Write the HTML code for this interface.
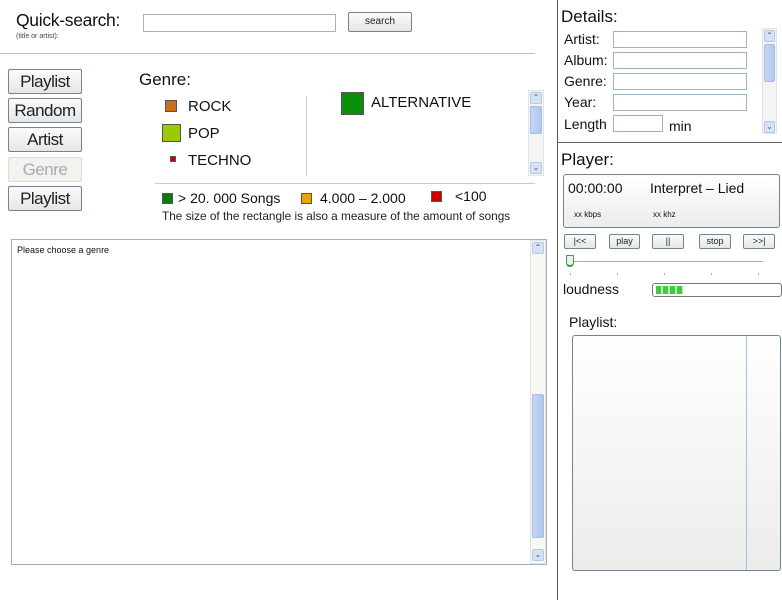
<!DOCTYPE html>
<html><head><meta charset="utf-8"><style>
*{margin:0;padding:0;box-sizing:border-box}
body{width:782px;height:600px;background:#fff;position:relative;overflow:hidden;font-family:"Liberation Sans",Arial,sans-serif;color:#111}
.a{position:absolute;white-space:nowrap}
.btn{position:absolute;border:1px solid #6f8494;border-radius:2px;background:linear-gradient(#fbfbfb,#e6e6e6);text-align:center;color:#222;white-space:nowrap}
.inp{position:absolute;border:1px solid #9fb3c3;background:#fff}
.sb{position:absolute;background:#f4f4f4;border:1px solid #dde4ec}
.arr{position:absolute;left:1px;width:12px;height:12px;background:#d6e1f3;border:1px solid #b7c8e3;border-radius:2px;font-size:8px;line-height:10px;text-align:center;color:#3a5b8c}
.thumb{position:absolute;left:1px;width:12px;background:linear-gradient(90deg,#c5d6f5,#b2c7ee);border:1px solid #a8bde4;border-radius:2px}
.sq{position:absolute;border:1px solid #555}
</style></head><body>
<div class="a" style="left:16px;top:10px;font-size:17.5px;letter-spacing:-0.3px">Quick-search:</div>
<div class="a" style="left:16px;top:33px;font-size:7px;color:#444">(title or artist):</div>
<div class="inp" style="left:143px;top:14px;width:193px;height:18px"></div>
<div class="btn" style="left:348px;top:12px;width:64px;height:20px;font-size:10px;line-height:17px">search</div>
<div class="a" style="left:0;top:53px;width:535px;height:1px;background:#b8c4cc"></div>
<div class="a" style="left:557px;top:0;width:1px;height:600px;background:#555"></div>

<div class="btn" style="left:8px;top:69px;width:74px;height:25px;font-size:17px;line-height:23px;letter-spacing:-0.5px">Playlist</div>
<div class="btn" style="left:8px;top:98px;width:74px;height:25px;font-size:17px;line-height:23px;letter-spacing:-0.5px">Random</div>
<div class="btn" style="left:8px;top:127px;width:74px;height:25px;font-size:17px;line-height:23px;letter-spacing:-0.5px">Artist</div>
<div class="btn" style="left:8px;top:157px;width:74px;height:25px;font-size:17px;line-height:23px;letter-spacing:-0.5px;color:#aaa;border-color:#dcdcd4;background:#f2f2ee">Genre</div>
<div class="btn" style="left:8px;top:186px;width:74px;height:25px;font-size:17px;line-height:23px;letter-spacing:-0.5px">Playlist</div>

<div class="a" style="left:139px;top:70px;font-size:17px">Genre:</div>
<div class="sq" style="left:165px;top:100px;width:12px;height:12px;background:#cc6e1c"></div>
<div class="a" style="left:188px;top:98px;font-size:15px">ROCK</div>
<div class="sq" style="left:162px;top:124px;width:19px;height:18px;background:#99cc00"></div>
<div class="a" style="left:188px;top:125px;font-size:15px">POP</div>
<div class="sq" style="left:170px;top:156px;width:6px;height:6px;background:#c00"></div>
<div class="a" style="left:188px;top:152px;font-size:15px">TECHNO</div>
<div class="a" style="left:306px;top:96px;width:1px;height:80px;background:#ccc"></div>
<div class="sq" style="left:341px;top:92px;width:23px;height:23px;background:#0a8f0a"></div>
<div class="a" style="left:371px;top:94px;font-size:15px">ALTERNATIVE</div>
<div class="sb" style="left:528px;top:90px;width:16px;height:86px">
<div class="arr" style="top:1px">&#8963;</div>
<div class="thumb" style="top:15px;height:28px"></div>
<div class="arr" style="top:71px">&#8964;</div></div>
<div class="a" style="left:155px;top:183px;width:380px;height:1px;background:#ccc"></div>
<div class="sq" style="left:162px;top:193px;width:11px;height:11px;background:#0a7a0a"></div>
<div class="a" style="left:178px;top:190px;font-size:14px">&gt; 20. 000 Songs</div>
<div class="sq" style="left:301px;top:193px;width:11px;height:11px;background:#f2a000"></div>
<div class="a" style="left:320px;top:190px;font-size:14px">4.000 – 2.000</div>
<div class="sq" style="left:431px;top:191px;width:11px;height:11px;background:#c00"></div>
<div class="a" style="left:455px;top:188px;font-size:14px">&lt;100</div>
<div class="a" style="left:162px;top:209px;font-size:11.8px;color:#222">The size of the rectangle is also a measure of the amount of songs</div>

<div class="a" style="left:11px;top:239px;width:536px;height:326px;border:1px solid #9fb3c3;background:#fff"></div>
<div class="a" style="left:17px;top:245px;font-size:9px">Please choose a genre</div>
<div class="sb" style="left:530px;top:240px;width:16px;height:324px;background:#f7f7f4">
<div class="arr" style="top:1px">&#8963;</div>
<div class="thumb" style="top:153px;height:144px"></div>
<div class="arr" style="top:308px">&#8964;</div></div>

<div class="a" style="left:561px;top:7px;font-size:17px">Details:</div>
<div class="a" style="left:564px;top:31px;font-size:14px">Artist:</div>
<div class="inp" style="left:613px;top:31px;width:134px;height:17px"></div>
<div class="a" style="left:564px;top:52px;font-size:14px">Album:</div>
<div class="inp" style="left:613px;top:52px;width:134px;height:17px"></div>
<div class="a" style="left:564px;top:73px;font-size:14px">Genre:</div>
<div class="inp" style="left:613px;top:73px;width:134px;height:17px"></div>
<div class="a" style="left:564px;top:94px;font-size:14px">Year:</div>
<div class="inp" style="left:613px;top:94px;width:134px;height:17px"></div>
<div class="a" style="left:564px;top:116px;font-size:14px">Length</div>
<div class="inp" style="left:613px;top:115px;width:50px;height:17px"></div>
<div class="a" style="left:669px;top:118px;font-size:14px">min</div>
<div class="sb" style="left:762px;top:28px;width:15px;height:106px">
<div class="arr" style="top:1px;width:11px">&#8963;</div>
<div class="thumb" style="top:15px;height:38px;width:11px"></div>
<div class="arr" style="top:92px;width:11px">&#8964;</div></div>
<div class="a" style="left:557px;top:142px;width:225px;height:1px;background:#666"></div>

<div class="a" style="left:561px;top:150px;font-size:17px">Player:</div>
<div class="a" style="left:563px;top:174px;width:217px;height:54px;border:1px solid #6f8494;border-radius:3px;background:linear-gradient(#fff,#ececec)"></div>
<div class="a" style="left:568px;top:180px;font-size:14px">00:00:00</div>
<div class="a" style="left:650px;top:180px;font-size:14px">Interpret – Lied</div>
<div class="a" style="left:574px;top:210px;font-size:8px">xx kbps</div>
<div class="a" style="left:653px;top:210px;font-size:8px">xx khz</div>
<div class="btn" style="left:564px;top:234px;width:32px;height:15px;font-size:9px;line-height:13px">|&lt;&lt;</div>
<div class="btn" style="left:609px;top:234px;width:31px;height:15px;font-size:9px;line-height:13px">play</div>
<div class="btn" style="left:652px;top:234px;width:32px;height:15px;font-size:9px;line-height:13px">||</div>
<div class="btn" style="left:699px;top:234px;width:32px;height:15px;font-size:9px;line-height:13px">stop</div>
<div class="btn" style="left:743px;top:234px;width:32px;height:15px;font-size:9px;line-height:13px">&gt;&gt;|</div>
<div class="a" style="left:570px;top:261px;width:193px;height:1px;background:#aaa"></div>
<div class="a" style="left:566px;top:255px;width:8px;height:12px;border:1px solid #5a8a5a;border-bottom:2px solid #2a9a2a;background:#eee;border-radius:1px 1px 4px 4px"></div>
<div class="a" style="left:570px;top:273px;width:1px;height:2px;background:#aaa"></div>
<div class="a" style="left:617px;top:273px;width:1px;height:2px;background:#aaa"></div>
<div class="a" style="left:664px;top:273px;width:1px;height:2px;background:#aaa"></div>
<div class="a" style="left:711px;top:273px;width:1px;height:2px;background:#aaa"></div>
<div class="a" style="left:758px;top:273px;width:1px;height:2px;background:#aaa"></div>
<div class="a" style="left:563px;top:281px;font-size:14px">loudness</div>
<div class="a" style="left:652px;top:283px;width:130px;height:14px;border:1px solid #777;border-radius:3px;background:#fff"></div>
<div class="a" style="left:656px;top:286px;width:27px;height:8px;background:repeating-linear-gradient(90deg,#3ccc3c 0 5px,#bfe9bf 5px 7px)"></div>
<div class="a" style="left:569px;top:314px;font-size:14px">Playlist:</div>
<div class="a" style="left:572px;top:335px;width:209px;height:236px;border:1px solid #6f8494;border-radius:3px;background:linear-gradient(#fff,#ececea)"></div>
<div class="a" style="left:746px;top:336px;width:1px;height:234px;background:#9cc0e6"></div>
</body></html>
